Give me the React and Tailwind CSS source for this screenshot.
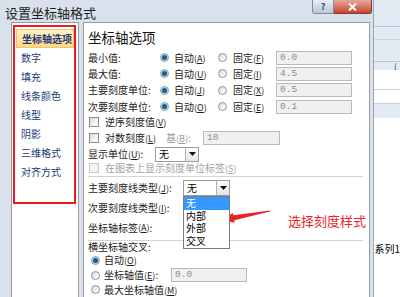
import React from 'react';

const NAV = ['坐标轴选项', '数字', '填充', '线条颜色', '线型', '阴影', '三维格式', '对齐方式'];

function Key({ k }) {
  return (
    <span className="text-[9px]">
      (<span className="underline">{k}</span>)
    </span>
  );
}

function Radio({ on }) {
  return (
    <span className="w-[9px] h-[9px] rounded-full border border-[#8c949c] bg-linear-to-br from-[#d9dde2] to-white flex items-center justify-center shrink-0">
      {on && <span className="w-[5px] h-[5px] rounded-full bg-[#1d5a8e] shadow-[0_0_0_1px_#9cc9ea]" />}
    </span>
  );
}

function Check({ disabled }) {
  return (
    <span
      className={`w-[10px] h-[10px] border shrink-0 ${
        disabled ? 'border-[#c8c8c8] bg-[#f4f4f4]' : 'border-[#8e8f8f] bg-linear-to-br from-[#dcdcdc] to-white'
      }`}
    />
  );
}

function Field({ value, w }) {
  return (
    <div
      className={`${w} h-[14px] border border-[#b9b9b9] bg-[#f0f0f0] pl-[3px] text-[9.5px] leading-[12px] text-[#8d8d8d] font-['Liberation_Mono',monospace]`}
    >
      {value}
    </div>
  );
}

function Select({ w, h }) {
  return (
    <div className={`${w} ${h} border border-[#9c9c9c] bg-white flex items-stretch`}>
      <span className="flex-1 pl-[3px] flex items-center text-[10px] text-black">无</span>
      <span className="w-[13px] border-l border-[#b0b0b0] bg-linear-to-b from-white to-[#e4e4e4] flex items-center justify-center">
        <svg width="7" height="4" viewBox="0 0 7 4">
          <path d="M0 0h7L3.5 4z" fill="#111" />
        </svg>
      </span>
    </div>
  );
}

function AutoFixed({ label, a, f, value }) {
  return (
    <div className="h-[17px] flex items-center">
      <span className="w-[72px]">{label}</span>
      <Radio on />
      <span className="ml-[5px] w-[44px]">
        自动<Key k={a} />
      </span>
      <Radio />
      <span className="ml-[6px] w-[43px]">
        固定<Key k={f} />
      </span>
      <Field value={value} w="w-[76px]" />
    </div>
  );
}

export default function App() {
  return (
    <div className="w-[400px] h-[297px] overflow-hidden flex bg-white font-['Noto_Sans_CJK_SC',sans-serif] text-[10px] text-[#1b1b1b] leading-none relative">
      {/* dialog */}
      <div className="w-[374px] h-full flex flex-col bg-[#d9e2ec] border-r border-[#9aa7b6]">
        <div className="h-[22px] shrink-0 flex items-start">
          <span className="pl-[5px] pt-[6px] text-[13px] text-[#1e1e1e]">设置坐标轴格式</span>
          <div className="ml-auto flex mr-[1px]">
            <span className="w-[22px] h-[14px] rounded-bl-[3px] border border-t-0 border-[#7f8b99] bg-linear-to-b from-[#e8eef5] to-[#b9c8d9] text-[9px] leading-[12px] font-bold text-[#2f4a6a] flex items-center justify-center">
              ?
            </span>
            <span className="w-[38px] h-[14px] rounded-br-[3px] border border-t-0 border-l-0 border-[#7a3a33] bg-linear-to-b from-[#e9a89a] to-[#c5412f] flex items-center justify-center">
              <svg width="9" height="8" viewBox="0 0 9 8">
                <path d="M1 0.5l7 7M8 0.5l-7 7" stroke="#fff" strokeWidth="2" />
              </svg>
            </span>
          </div>
        </div>

        <div className="flex-1 flex pl-[11px] gap-[4px] min-h-0">
          {/* nav */}
          <div className="w-[68px] shrink-0 border border-[#9b9b9b] border-b-0 bg-white pt-[2px] pl-[1px]">
            <div className="w-[63px] h-[179px] border-2 border-[#e51c23] pt-[2px] pl-[1px] flex flex-col">
              {NAV.map((n, i) => (
                <div
                  key={n}
                  className={`h-[19px] w-[58px] pl-[5px] flex items-center text-[10px] text-[#1c3b78] ${
                    i === 0 ? 'bg-linear-to-b from-[#fff1c8] to-[#ffd780] border border-[#f2c46b] font-semibold' : ''
                  }`}
                >
                  {n}
                </div>
              ))}
            </div>
          </div>

          {/* options */}
          <div className="w-[287px] shrink-0 border border-[#9b9b9b] border-b-0 bg-white pl-[4px] pt-[5px] flex flex-col">
            <div className="h-[20px] flex items-center text-[13.5px] text-[#151515]">坐标轴选项</div>
            <div className="mt-[2px]" />
            <AutoFixed label="最小值:" a="A" f="F" value="0.0" />
            <AutoFixed label="最大值:" a="U" f="I" value="4.5" />
            <AutoFixed label="主要刻度单位:" a="J" f="X" value="0.5" />
            <AutoFixed label="次要刻度单位:" a="O" f="E" value="0.1" />

            <div className="h-[15px] flex items-center pl-[1px]">
              <Check />
              <span className="ml-[6px]">
                逆序刻度值<Key k="V" />
              </span>
            </div>
            <div className="h-[17px] flex items-center pl-[1px]">
              <Check />
              <span className="ml-[6px] w-[61px]">
                对数刻度<Key k="L" />
              </span>
              <span className="w-[37px] text-[#9a9a9a]">
                基<Key k="B" />:
              </span>
              <Field value="10" w="w-[77px]" />
            </div>
            <div className="h-[17px] flex items-center">
              <span className="w-[67px]">
                显示单位<Key k="U" />:
              </span>
              <Select w="w-[44px]" h="h-[15px]" />
            </div>
            <div className="h-[11px] flex items-center pl-[1px]">
              <Check disabled />
              <span className="ml-[6px] text-[#a3a3a3]">
                在图表上显示刻度单位标签<Key k="S" />
              </span>
            </div>
            <div className="mt-[3px] w-[275px] h-px bg-[#d4d4d4]" />

            <div className="h-[22px] flex items-center">
              <span className="w-[95px]">
                主要刻度线类型<Key k="J" />:
              </span>
              <div className="relative">
                <Select w="w-[47px]" h="h-[16px]" />
                <div className="absolute left-0 top-[16px] w-[47px] border border-[#7a7a7a] bg-white flex flex-col z-10 text-[10px] text-black">
                  <span className="h-[13px] pl-[2px] flex items-center bg-[#3399ff] text-white">无</span>
                  <span className="h-[12.5px] pl-[2px] flex items-center">内部</span>
                  <span className="h-[12.5px] pl-[2px] flex items-center">外部</span>
                  <span className="h-[13px] pl-[2px] flex items-center">交叉</span>
                </div>
              </div>
            </div>
            <div className="h-[20px] flex items-center">
              <span className="w-[95px]">
                次要刻度线类型<Key k="I" />:
              </span>
            </div>
            <div className="h-[21px] flex items-center">
              坐标轴标签<Key k="A" />:
            </div>
            <div className="mt-[2px] w-[275px] h-px bg-[#d4d4d4]" />
            <div className="h-[12px] flex items-center">横坐标轴交叉:</div>
            <div className="h-[16px] flex items-center pl-[3px]">
              <Radio on />
              <span className="ml-[4px]">
                自动<Key k="O" />
              </span>
            </div>
            <div className="h-[15px] flex items-center pl-[3px]">
              <Radio />
              <span className="ml-[4px] w-[67px]">
                坐标轴值<Key k="E" />:
              </span>
              <Field value="0.0" w="w-[76px]" />
            </div>
            <div className="h-[15px] flex items-center pl-[3px]">
              <Radio />
              <span className="ml-[4px]">
                最大坐标轴值<Key k="M" />
              </span>
            </div>
          </div>
        </div>
      </div>

      {/* excel behind */}
      <div className="w-[26px] h-full flex flex-col">
        <div className="h-[118px] bg-[#e3eaf3] flex flex-col">
          <div className="h-[27px] border-b border-[#b7c4d4]" />
          <div className="h-[13px] border-b border-[#c9d3df]" />
          <div className="h-[22px] border-b border-[#b7c4d4]" />
          <div className="h-[8px] pl-[20px] text-[9px] text-[#333]">(</div>
          <div className="h-[20px] bg-white border-b border-[#c9d3df]" />
          <div className="h-[14px] bg-white border-b border-[#c9d3df]" />
        </div>
        <div className="flex-1 flex">
          <div className="w-[5px] bg-[#5a84c0]" />
          <div className="flex-1 bg-white pt-[126px] text-[10px] text-black whitespace-nowrap">系列1</div>
        </div>
      </div>

      {/* annotation */}
      <svg className="absolute left-0 top-0 pointer-events-none" width="400" height="297">
        <polygon
          points="222,220 232.9,212.9 233.3,215.3 269.9,210.5 270.1,211.5 234.3,220.3 234.7,222.7"
          fill="#e8242a"
        />
      </svg>
      <span className="absolute left-[288px] top-[214px] text-[13px] text-[#e4262b] leading-none">选择刻度样式</span>
    </div>
  );
}
